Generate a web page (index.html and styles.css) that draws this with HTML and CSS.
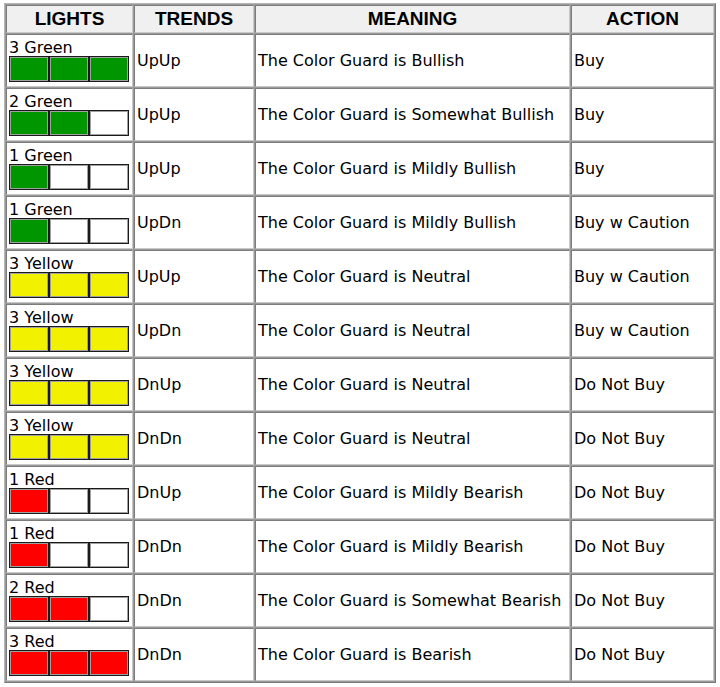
FILE: index.html
```html
<!DOCTYPE html>
<html>
<head>
<meta charset="utf-8">
<link rel="stylesheet" href="styles.css">
</head>
<body>
<table class="guard">
  <colgroup>
    <col class="c-lights"><col class="c-trends"><col class="c-meaning"><col class="c-action">
  </colgroup>
  <thead>
    <tr><th>LIGHTS</th><th>TRENDS</th><th>MEANING</th><th>ACTION</th></tr>
  </thead>
  <tbody>
    <tr><td class="lights"><div class="label">3 Green</div><div class="bar"><span class="box g"></span><span class="box g"></span><span class="box g"></span></div></td><td>UpUp</td><td>The Color Guard is Bullish</td><td>Buy</td></tr>
    <tr><td class="lights"><div class="label">2 Green</div><div class="bar"><span class="box g"></span><span class="box g"></span><span class="box"></span></div></td><td>UpUp</td><td>The Color Guard is Somewhat Bullish</td><td>Buy</td></tr>
    <tr><td class="lights"><div class="label">1 Green</div><div class="bar"><span class="box g"></span><span class="box"></span><span class="box"></span></div></td><td>UpUp</td><td>The Color Guard is Mildly Bullish</td><td>Buy</td></tr>
    <tr><td class="lights"><div class="label">1 Green</div><div class="bar"><span class="box g"></span><span class="box"></span><span class="box"></span></div></td><td>UpDn</td><td>The Color Guard is Mildly Bullish</td><td>Buy w Caution</td></tr>
    <tr><td class="lights"><div class="label">3 Yellow</div><div class="bar"><span class="box y"></span><span class="box y"></span><span class="box y"></span></div></td><td>UpUp</td><td>The Color Guard is Neutral</td><td>Buy w Caution</td></tr>
    <tr><td class="lights"><div class="label">3 Yellow</div><div class="bar"><span class="box y"></span><span class="box y"></span><span class="box y"></span></div></td><td>UpDn</td><td>The Color Guard is Neutral</td><td>Buy w Caution</td></tr>
    <tr><td class="lights"><div class="label">3 Yellow</div><div class="bar"><span class="box y"></span><span class="box y"></span><span class="box y"></span></div></td><td>DnUp</td><td>The Color Guard is Neutral</td><td>Do Not Buy</td></tr>
    <tr><td class="lights"><div class="label">3 Yellow</div><div class="bar"><span class="box y"></span><span class="box y"></span><span class="box y"></span></div></td><td>DnDn</td><td>The Color Guard is Neutral</td><td>Do Not Buy</td></tr>
    <tr><td class="lights"><div class="label">1 Red</div><div class="bar"><span class="box r"></span><span class="box"></span><span class="box"></span></div></td><td>DnUp</td><td>The Color Guard is Mildly Bearish</td><td>Do Not Buy</td></tr>
    <tr><td class="lights"><div class="label">1 Red</div><div class="bar"><span class="box r"></span><span class="box"></span><span class="box"></span></div></td><td>DnDn</td><td>The Color Guard is Mildly Bearish</td><td>Do Not Buy</td></tr>
    <tr><td class="lights"><div class="label">2 Red</div><div class="bar"><span class="box r"></span><span class="box r"></span><span class="box"></span></div></td><td>DnDn</td><td>The Color Guard is Somewhat Bearish</td><td>Do Not Buy</td></tr>
    <tr><td class="lights"><div class="label">3 Red</div><div class="bar"><span class="box r"></span><span class="box r"></span><span class="box r"></span></div></td><td>DnDn</td><td>The Color Guard is Bearish</td><td>Do Not Buy</td></tr>
  </tbody>
</table>
</body>
</html>
```
FILE: styles.css
```css
html, body {
  margin: 0;
  padding: 0;
  background: #ffffff;
}

body {
  padding: 3px 0 0 4px;
}

.guard {
  table-layout: fixed;
  width: 712px;
  border-collapse: separate;
  border-spacing: 1px;
  border: 1px solid;
  border-color: #b4b4b4 #7a7a7a #7a7a7a #b4b4b4;
  background: #9a9a9a;
  font-family: "DejaVu Sans", Verdana, sans-serif;
  font-size: 16px;
  color: #000;
}

.c-lights { width: 127px; }
.c-trends { width: 120px; }
.c-meaning { width: 315px; }
.c-action { width: 143px; }

.guard th,
.guard td {
  border: 1px solid;
  border-color: #7c7c7c #c8c8c8 #c8c8c8 #7c7c7c;
  padding: 0 0 0 2px;
  overflow: hidden;
  white-space: nowrap;
}

.guard th {
  height: 26px;
  background: #f0f0f0;
  font-family: "Liberation Sans", Arial, sans-serif;
  font-weight: bold;
  font-size: 19px;
  text-align: center;
  padding: 0;
  line-height: 26px;
}

.guard td {
  height: 51px;
  background: #fff;
  text-align: left;
  vertical-align: middle;
  line-height: 18px;
}

.guard td.lights {
  vertical-align: top;
  padding: 2px 0 0 2px;
  height: 49px;
}

.label {
  height: 19px;
  line-height: 18px;
  padding-top: 2px;
  box-sizing: border-box;
}

.bar {
  display: flex;
  width: 120px;
  height: 26px;
}

.box {
  box-sizing: border-box;
  flex: 0 0 40px;
  height: 26px;
  background: #fff;
  border: 1px solid #1a1a1a;
  box-shadow: inset 0 0 0 1px #a0a0a0;
}

.box.g { background: #009600; }
.box.y { background: #f2f200; }
.box.r { background: #fe0000; }
```
